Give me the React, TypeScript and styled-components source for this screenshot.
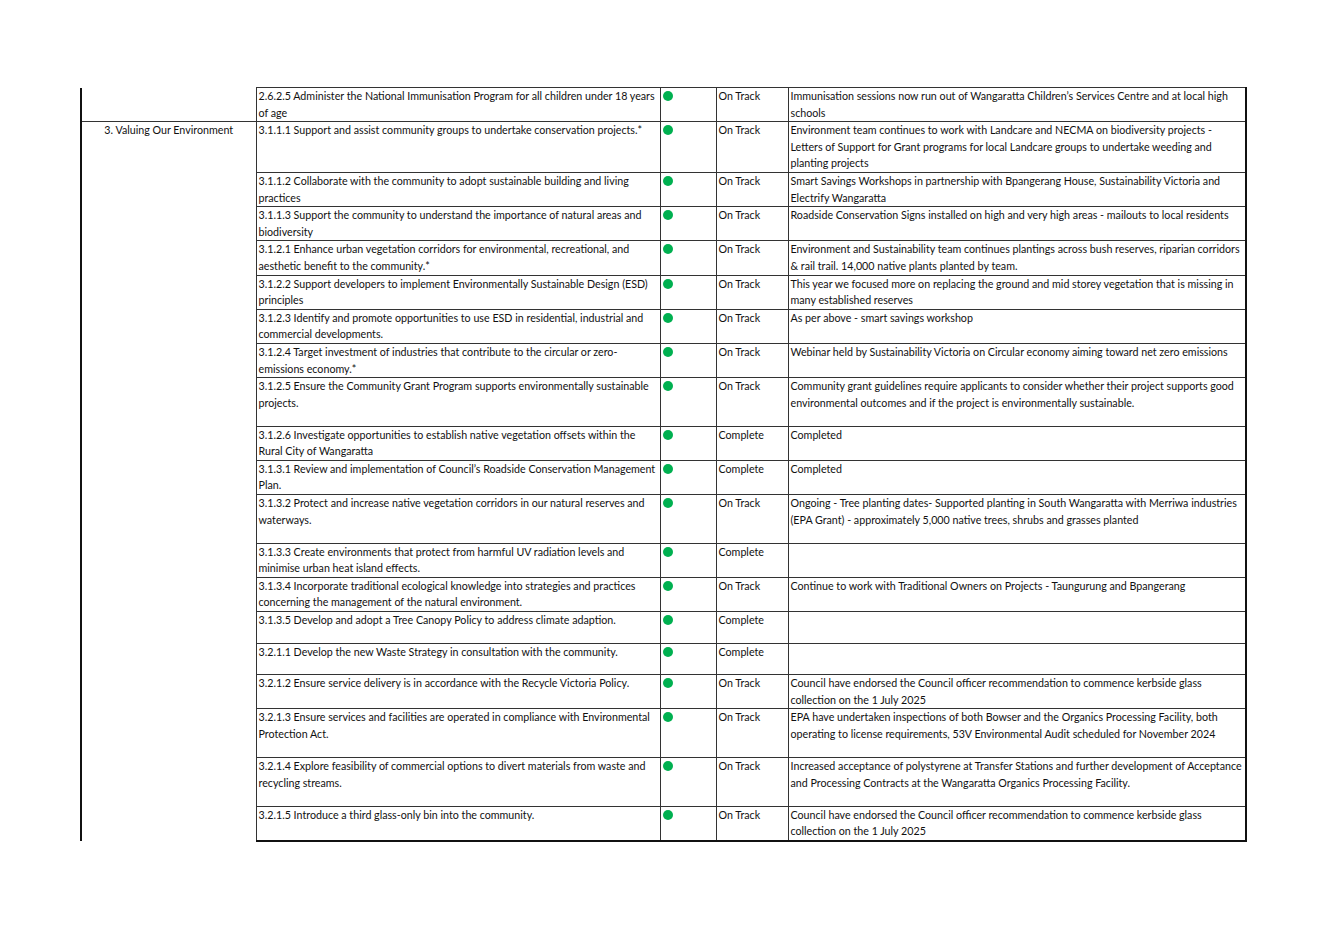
import React from 'react'
import styled, { createGlobalStyle } from 'styled-components'

const Global = createGlobalStyle`
  body { margin: 0; background: #fff; font-family: Lato, "Liberation Sans", sans-serif; color: #111; }
`

const Page = styled.div`
  padding: 87px 0 0 80px;
`

const Table = styled.table`
  border-collapse: collapse;
  table-layout: fixed;
  font-size: 10.7px;
  line-height: 16.6px;
`

const Col = styled.col<{ $w: number }>`
  width: ${p => p.$w}px;
`

const Cell = styled.td<{ $h: number }>`
  border: 1px solid #333;
  vertical-align: top;
  padding: 0 2px;
  height: ${p => p.$h - 1.4}px;
  box-sizing: border-box;
  &:last-child { border-right: 2px solid #111; }
`

const ThemeCell = styled.td<{ $first?: boolean }>`
  border-left: 2px solid #111;
  border-bottom: ${p => (p.$first ? '1px solid #333' : 'none')};
  vertical-align: top;
  text-align: center;
  padding: 0 2px;
`

const Dot = styled.span`
  display: inline-block;
  width: 10px;
  height: 10px;
  border-radius: 50%;
  background: #00b050;
  margin-top: 3px;
`

const LastRow = styled.tr`
  td { border-bottom: 2px solid #111; }
`

type Row = [string, string, string, number]

const rows: Row[] = [
  ['3.1.1.1 Support and assist community groups to undertake conservation projects.*', 'On Track', 'Environment team continues to work with Landcare and NECMA on biodiversity projects - Letters of Support for Grant programs for local Landcare groups to undertake weeding and planting projects', 50],
  ['3.1.1.2 Collaborate with the community to adopt sustainable building and living practices', 'On Track', 'Smart Savings Workshops in partnership with Bpangerang House, Sustainability Victoria and Electrify Wangaratta', 33],
  ['3.1.1.3 Support the community to understand the importance of natural areas and biodiversity', 'On Track', 'Roadside Conservation Signs installed on high and very high areas - mailouts to local residents', 33],
  ['3.1.2.1 Enhance urban vegetation corridors for environmental, recreational, and aesthetic benefit to the community.*', 'On Track', 'Environment and Sustainability team continues plantings across bush reserves, riparian corridors & rail trail. 14,000 native plants planted by team.', 33],
  ['3.1.2.2 Support developers to implement Environmentally Sustainable Design (ESD) principles', 'On Track', 'This year we focused more on replacing the ground and mid storey vegetation that is missing in many established reserves', 33],
  ['3.1.2.3 Identify and promote opportunities to use ESD in residential, industrial and commercial developments.', 'On Track', 'As per above - smart savings workshop', 34],
  ['3.1.2.4 Target investment of industries that contribute to the circular or zero-emissions economy.*', 'On Track', 'Webinar held by Sustainability Victoria on Circular economy aiming toward net zero emissions', 33],
  ['3.1.2.5 Ensure the Community Grant Program supports environmentally sustainable projects.', 'On Track', 'Community grant guidelines require applicants to consider whether their project supports good environmental outcomes and if the project is environmentally sustainable.', 50],
  ['3.1.2.6 Investigate opportunities to establish native vegetation offsets within the Rural City of Wangaratta', 'Complete', 'Completed', 33],
  ['3.1.3.1 Review and implementation of Council\u2019s Roadside Conservation Management Plan.', 'Complete', 'Completed', 33],
  ['3.1.3.2 Protect and increase native vegetation corridors in our natural reserves and waterways.', 'On Track', 'Ongoing - Tree planting dates- Supported planting in South Wangaratta with Merriwa industries (EPA Grant) - approximately 5,000 native trees, shrubs and grasses planted', 50],
  ['3.1.3.3 Create environments that protect from harmful UV radiation levels and minimise urban heat island effects.', 'Complete', '', 34],
  ['3.1.3.4 Incorporate traditional ecological knowledge into strategies and practices concerning the management of the natural environment.', 'On Track', 'Continue to work with Traditional Owners on Projects - Taungurung and Bpangerang', 33],
  ['3.1.3.5 Develop and adopt a Tree Canopy Policy to address climate adaption.', 'Complete', '', 33],
  ['3.2.1.1 Develop the new Waste Strategy in consultation with the community.', 'Complete', '', 33],
  ['3.2.1.2 Ensure service delivery is in accordance with the Recycle Victoria Policy.', 'On Track', 'Council have endorsed the Council officer recommendation to commence kerbside glass collection on the 1 July 2025', 34],
  ['3.2.1.3 Ensure services and facilities are operated in compliance with Environmental Protection Act.', 'On Track', 'EPA have undertaken inspections of both Bowser and the Organics Processing Facility, both operating to license requirements, 53V Environmental Audit scheduled for November 2024', 50],
  ['3.2.1.4 Explore feasibility of commercial options to divert materials from waste and recycling streams.', 'On Track', 'Increased acceptance of polystyrene at Transfer Stations and further development of Acceptance and Processing Contracts at the Wangaratta Organics Processing Facility.', 50],
  ['3.2.1.5 Introduce a third glass-only bin into the community.', 'On Track', 'Council have endorsed the Council officer recommendation to commence kerbside glass collection on the 1 July 2025', 33],
]

const firstRow: Row = ['2.6.2.5 Administer the National Immunisation Program for all children under 18 years of age', 'On Track', 'Immunisation sessions now run out of Wangaratta Children\u2019s Services Centre and at local high schools', 33]

const Cells = ({ r }: { r: Row }) => (
  <>
    <Cell $h={r[3]}>{r[0]}</Cell>
    <Cell $h={r[3]}><Dot /></Cell>
    <Cell $h={r[3]}>{r[1]}</Cell>
    <Cell $h={r[3]}>{r[2]}</Cell>
  </>
)

export default function App() {
  return (
    <Page>
      <Global />
      <Table>
        <colgroup>
          <Col $w={175} />
          <Col $w={404} />
          <Col $w={56} />
          <Col $w={72} />
          <Col $w={458} />
        </colgroup>
        <tbody>
          <tr>
            <ThemeCell $first />
            <Cells r={firstRow} />
          </tr>
          {rows.map((r, i) => {
            const Tr = i === rows.length - 1 ? LastRow : 'tr'
            return (
              <Tr key={i}>
                {i === 0 && <ThemeCell rowSpan={rows.length}>3. Valuing Our Environment</ThemeCell>}
                <Cells r={r} />
              </Tr>
            )
          })}
        </tbody>
      </Table>
    </Page>
  )
}
